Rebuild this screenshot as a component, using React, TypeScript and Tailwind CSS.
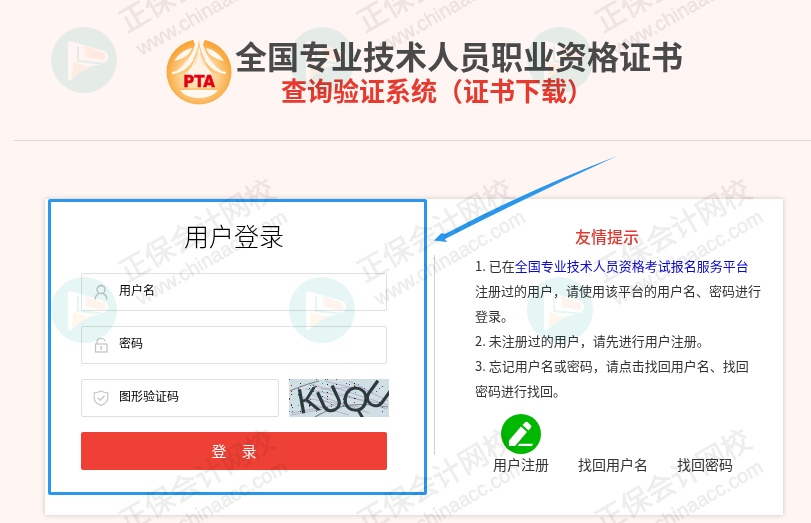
import type { ReactNode } from 'react';

const tiles = [0, 1, 2].flatMap(row => [0, 1, 2].map(col => ({ x: col * 238, y: row * 250 })));

const speckColors = ['#2b3fd0', '#c0392b', '#1e8449', '#8e2fa8', '#222222', '#2a9fc4'];

const specks = Array.from({ length: 85 }, (_, i) => ({
  x: (i * i * 7 + i * 31) % 99,
  y: (i * i * 3 + i * 17) % 37,
  color: speckColors[i % speckColors.length],
}));

function Watermark() {
  return (
    <div className="absolute inset-0 overflow-hidden pointer-events-none mix-blend-multiply" aria-hidden="true">
      <svg className="w-full h-full">
        {tiles.map(tile => (
          <g key={`${tile.x}-${tile.y}`} transform={`translate(${tile.x} ${tile.y})`}>
            <path
              d="M51 60 A33 33 0 1 1 117 60 A33 33 0 1 1 51 60 Z M70 41 L104 51 Q109 53 108 58 Q107 62 101 64 L84 68 L71 80 Q68 82 68 77 V43 Z"
              fillRule="evenodd"
              fill="#e5f6f4"
            />
            <path d="M85 46 L104 53 Q107 57 104 60 L86 57 Z" fill="#fff3ee" />
            <path d="M73 62 L89 67 L72 78 Z" fill="#fff6ec" />
            <path d="M78 46 V61 L106 64" fill="none" stroke="#e5f6f4" strokeWidth="2" />
            <g transform="translate(127 33) rotate(-30)" fill="#786e6e" fillOpacity="0.1" stroke="#786e6e" strokeOpacity="0.06" strokeWidth="1">
              <text x="0" y="0" fontSize="29" fontFamily='"Noto Sans CJK SC", sans-serif'>
                正保会计网校
              </text>
              <text x="1" y="27" fontSize="20" fontFamily='"Liberation Sans", sans-serif'>
                www.chinaacc.com
              </text>
            </g>
          </g>
        ))}
      </svg>
    </div>
  );
}

function PtaLogo() {
  return (
    <svg className="size-[66px] shrink-0" viewBox="0 0 66 66" aria-label="PTA">
      <defs>
        <radialGradient id="ptaGold" cx="0.5" cy="0.55" r="0.5">
          <stop offset="0" stopColor="#fff3dc" />
          <stop offset="0.55" stopColor="#fdd595" />
          <stop offset="1" stopColor="#f9a73c" />
        </radialGradient>
      </defs>
      <circle cx="33" cy="33" r="32.5" fill="url(#ptaGold)" />
      {/* gap at the top of the ring and the peak rising through it */}
      <path d="M27 0 H39 L37 6 Q42 23 57 33 Q45 30 39 22 L46 37 H20 L27 22 Q21 30 9 33 Q24 23 29 6 Z" fill="#fff5f2" />
      <path d="M33 0 Q34 14 41 23 Q47 31 60 34 Q50 38 42 30 Q36 22 33 8 Q30 22 24 30 Q16 38 6 34 Q19 31 25 23 Q32 14 33 0 Z" fill="#fbc878" />
      <path d="M33 9 Q35 24 45 37 H21 Q31 24 33 9 Z" fill="#fff3e6" />
      <path d="M8 22 Q15 11 26 9 Q24 18 8 22 Z M58 22 Q51 11 40 9 Q42 18 58 22 Z" fill="#fff8f0" />
      <path d="M6 34 Q19 33 27 20 M60 34 Q47 33 39 20" fill="none" stroke="#fff8f0" strokeWidth="2" />
      <path d="M32 14 L29 26 M34 14 L38 27" fill="none" stroke="#f8cf96" strokeWidth="0.7" />
      <path d="M14 51 H52 Q46 59 33 59 Q20 59 14 51 Z" fill="#fff8f0" />
      <path d="M14 50 H52" stroke="#f9b45a" strokeWidth="1" />
      <text x="33" y="48" textAnchor="middle" fontSize="15" fontWeight="700" fontFamily='"DejaVu Sans", sans-serif' fill="#e50012" stroke="#e50012" strokeWidth="0.5">
        PTA
      </text>
    </svg>
  );
}

function UserIcon() {
  return (
    <svg className="size-4" viewBox="0 0 16 16" fill="none" stroke="#c2c2c2" strokeWidth="1.3">
      <circle cx="8" cy="5.5" r="4" />
      <path d="M2.2 15.5 Q2.2 11 6 9.3 M13.8 15.5 Q13.8 11 10 9.3" />
    </svg>
  );
}

function LockIcon() {
  return (
    <svg className="size-4" viewBox="0 0 16 16" fill="none" stroke="#c2c2c2" strokeWidth="1.2">
      <rect x="2.5" y="7" width="11.5" height="8" />
      <path d="M4 7 V5 Q4 1.5 8 1.5 Q12 1.5 12 4.5 M8.2 9.3 V13 M7 10 H9.4" />
    </svg>
  );
}

function ShieldIcon() {
  return (
    <svg className="size-4" viewBox="0 0 16 16" fill="none" stroke="#c8c8c8" strokeWidth="1.2">
      <path d="M8 0.8 Q10.5 2.7 14.8 2.9 V8 Q14.5 13 8 15.4 Q1.5 13 1.2 8 V2.9 Q5.5 2.7 8 0.8 Z" />
      <path d="M4.8 7.8 L7.3 10.2 L11.5 5.8" strokeWidth="1.5" />
    </svg>
  );
}

function Field({ icon, name, type = 'text' }: { icon: ReactNode; name: string; type?: string }) {
  return (
    <label className="flex items-center flex-1 min-w-0 h-[38px] pl-[11px] border border-[#e0e0e0] rounded-xs">
      {icon}
      <input
        type={type}
        aria-label={name}
        placeholder={name}
        className="flex-1 min-w-0 h-full pl-2.5 pb-1.5 text-xs text-black placeholder:text-black outline-none bg-transparent"
      />
    </label>
  );
}

function Captcha() {
  return (
    <svg className="w-[100px] h-[38px] shrink-0 -mr-0.5" viewBox="0 0 100 38" role="img" aria-label="图形验证码">
      <rect width="100" height="38" fill="#cfdfe4" />
      <g fill="none" stroke="#a78fae" strokeOpacity="0.65" strokeWidth="0.9">
        <path d="M22 5 L98 30 M16 10 L90 24 M28 16 L80 34 M12 22 L60 36 M36 2 L84 14 M60 2 L99 22 M2 34 L56 24 M10 18 L70 28 M44 8 L99 26" />
        <path d="M2 36 L34 30 M20 14 L52 30 M32 10 L74 8" />
      </g>
      <path d="M1 12 Q14 6 30 2 M26 38 Q55 20 99 28" fill="none" stroke="#7f8587" strokeWidth="1.1" />
      {specks.map((speck, i) => (
        <rect key={i} x={speck.x} y={speck.y} width="1" height="1" fill={speck.color} />
      ))}
      <g fontSize="34" fontFamily='Lato, "Liberation Sans", sans-serif' fill="#2d3a3e" textAnchor="middle">
        <text transform="translate(21 33) rotate(-10)">K</text>
        <text transform="translate(46 32) rotate(-25)">U</text>
        <text transform="translate(64 32) rotate(12)">Q</text>
        <text transform="translate(81 26) rotate(36)">U</text>
      </g>
    </svg>
  );
}

function LoginForm() {
  return (
    <form
      className="w-[379px] shrink-0 ml-[3px] pt-[15px] pb-[22px] pl-[30px] pr-[37px] border-[3px] border-[#2a97ef] rounded-xs"
      onSubmit={e => e.preventDefault()}
    >
      <h2 className="mb-5 text-center text-[25px] leading-9 font-light text-black">用户登录</h2>
      <div className="flex flex-col gap-[15px]">
        <div className="flex">
          <Field icon={<UserIcon />} name="用户名" />
        </div>
        <div className="flex">
          <Field icon={<LockIcon />} name="密码" type="password" />
        </div>
        <div className="flex gap-2.5">
          <Field icon={<ShieldIcon />} name="图形验证码" />
          <Captcha />
        </div>
        <button type="submit" className="h-[38px] rounded-xs bg-[#ee4035] text-[15px] text-white">
          登&#12288;录
        </button>
      </div>
    </form>
  );
}

function Tips() {
  return (
    <section className="flex-1 pt-[25px] pl-10 pr-[22px]">
      <h2 className="pr-[22px] mb-[5px] text-center text-base leading-6 font-medium text-[#e0382f]">友情提示</h2>
      <div className="text-[13px] leading-[25px] text-[#333]">
        <p>
          1. 已在<a href="#platform" className="text-[#0a0ad0]">全国专业技术人员资格考试报名服务平台</a>
          注册过的用户，请使用该平台的用户名、密码进行登录。
        </p>
        <p>2. 未注册过的用户，请先进行用户注册。</p>
        <p>3. 忘记用户名或密码，请点击找回用户名、找回密码进行找回。</p>
      </div>
      <nav className="flex items-end gap-[29px] pl-[18px] mt-[11px] text-sm leading-5 text-[#333]">
        <a href="#register" className="flex flex-col items-center">
          <svg className="size-10" viewBox="0 0 40 40">
            <circle cx="20" cy="20" r="20" fill="#00b800" />
            <path d="M8 32 V26.5 L20 12.5 L26 18 L14 32 Z" fill="#fff" />
            <path d="M21.5 11 L24.5 8 Q25.5 7.3 26.5 8 L30 11.5 Q30.7 12.5 30 13.5 L27.5 16.5 Z" fill="#fff" />
            <path d="M16.5 32 L18.5 29.8 H32 L31 32 Z" fill="#fff" />
          </svg>
          用户注册
        </a>
        <a href="#find-name">找回用户名</a>
        <a href="#find-password">找回密码</a>
      </nav>
    </section>
  );
}

export default function App() {
  return (
    <div className="relative min-h-screen bg-[#fff5f2] font-['Noto_Sans_CJK_SC',sans-serif]">
      <header className="flex items-center justify-center gap-[3px] ml-3.5 pl-6 pt-[37px] pb-[33px] border-b border-[#dcd5d1]">
        <PtaLogo />
        <div className="whitespace-nowrap font-bold">
          <h1 className="text-[32px] leading-9 text-[#4a4a4a]">全国专业技术人员职业资格证书</h1>
          <p className="pl-[46px] text-[26px] leading-[34px] text-[#e8392f]">查询验证系统（证书下载）</p>
        </div>
      </header>

      <main className="pt-[58px] pl-[45px] pr-7">
        <div className="relative flex pb-5 bg-white shadow-[0_0_5px_rgba(0,0,0,0.2)]">
          <LoginForm />
          <div className="w-px ml-[7px] mt-14 mb-10 bg-[#d2d2d2]" />
          <Tips />
          {/* arrow pointing at the login box */}
          <svg className="absolute left-[389px] -top-[43px] w-[184px] h-[87px] pointer-events-none" viewBox="0 0 184 87">
            <path d="M183 0 Q90 36 11 78 L7.5 77 L0 84.5 L13 86 L11 83 Q95 40 183 0 Z" fill="#2a97ef" />
          </svg>
        </div>
      </main>

      <Watermark />
    </div>
  );
}
